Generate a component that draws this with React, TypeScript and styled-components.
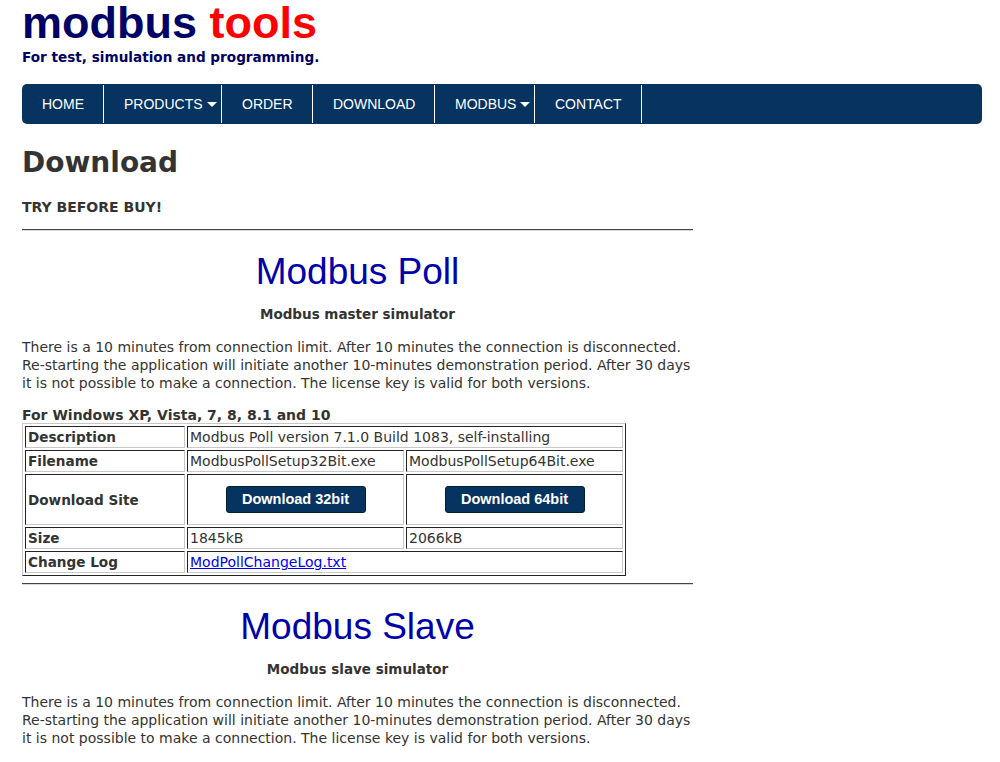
import React from "react";
import styled, { createGlobalStyle } from "styled-components";

const Global = createGlobalStyle`
  html, body { margin: 0; padding: 0; background: #fff; }
  body { font-family: "DejaVu Sans", Verdana, sans-serif; color: #333; }
`;

const Page = styled.div`
  padding: 0 18px 0 22px;
`;

const Header = styled.header`
  padding-top: 0;
`;

const Logo = styled.div`
  font-family: "Liberation Sans", Arial, sans-serif;
  font-weight: bold;
  font-size: 45px;
  line-height: 46px;
  color: #000066;
  margin: 0;
  span { color: #ff0000; }
`;

const Tagline = styled.div`
  font-family: "DejaVu Sans", sans-serif;
  font-weight: bold;
  font-size: 13.6px;
  color: #000066;
  margin-top: 3px;
  line-height: 16px;
`;

const Nav = styled.nav`
  margin-top: 19px;
  height: 40px;
  background: #06335f;
  border-radius: 5px;
  display: flex;
  align-items: stretch;
`;

const NavItem = styled.div<{ $w: number }>`
  width: ${(p) => p.$w}px;
  box-sizing: border-box;
  padding-left: 20px;
  display: flex;
  align-items: center;
  justify-content: flex-start;
  font-family: "Liberation Sans", Arial, sans-serif;
  font-size: 14px;
  color: #fff;
  position: relative;
  &::after {
    content: "";
    position: absolute;
    right: 0;
    top: 1px;
    bottom: 1px;
    width: 1px;
    background: #fff;
  }
`;

const Caret = styled.span`
  display: inline-block;
  width: 0;
  height: 0;
  margin-left: 4px;
  margin-top: 1px;
  border-left: 5px solid transparent;
  border-right: 5px solid transparent;
  border-top: 5px solid #fff;
`;

const Content = styled.main`
  width: 671px;
`;

const H1 = styled.h1`
  font-family: "DejaVu Sans", sans-serif;
  font-size: 28px;
  font-weight: bold;
  margin: 22px 0 0;
  line-height: 34px;
  color: #333;
`;

const Strong = styled.div`
  font-weight: bold;
  font-size: 14px;
  margin-top: 19px;
  line-height: 17px;
`;

const Rule = styled.hr<{ $mt: number }>`
  border: 0;
  border-top: 1px solid #444;
  border-bottom: 1px solid #d8d8d8;
  margin: ${(p) => p.$mt}px 0 0;
  height: 0;
`;

const ProductTitle = styled.h2<{ $mt: number }>`
  font-family: "Liberation Sans", Arial, sans-serif;
  font-weight: normal;
  font-size: 37px;
  line-height: 42px;
  color: #0000aa;
  text-align: center;
  margin: ${(p) => p.$mt}px 0 0;
`;

const Subtitle = styled.div`
  font-weight: bold;
  font-size: 13.5px;
  line-height: 18px;
  text-align: center;
  margin-top: 12px;
`;

const Para = styled.p`
  font-size: 14px;
  line-height: 18px;
  margin: 15px 0 0;
`;

const TableCaption = styled.div`
  font-weight: bold;
  font-size: 14px;
  line-height: 18px;
  margin-top: 14px;
`;

const Table = styled.table`
  border-collapse: separate;
  border-spacing: 2px;
  border: 1px solid;
  border-color: #c8c8c8 #222 #222 #c8c8c8;
  font-size: 14px;
  margin-top: -1px;
`;

const Td = styled.td<{ $head?: boolean; $center?: boolean; $w?: number }>`
  border: 1px solid;
  border-color: #222 #c8c8c8 #c8c8c8 #222;
  padding: 1px 2px;
  height: 18px;
  line-height: 18px;
  font-size: ${(p) => (p.$head ? "13.6px" : "14px")};
  font-weight: ${(p) => (p.$head ? "bold" : "normal")};
  text-align: ${(p) => (p.$center ? "center" : "left")};
  width: ${(p) => (p.$w ? `${p.$w}px` : "auto")};
  vertical-align: middle;
  white-space: nowrap;
`;

const TallTd = styled(Td)`
  height: 47px;
`;

const Button = styled.a`
  display: inline-block;
  width: 140px;
  box-sizing: border-box;
  height: 27px;
  line-height: 25px;
  background: #06335f;
  border: 1px solid #022;
  border-radius: 3px;
  color: #fff;
  font-family: "Liberation Sans", Arial, sans-serif;
  font-weight: bold;
  font-size: 14.5px;
  text-decoration: none;
  text-align: center;
`;

const Link = styled.a`
  color: #0000ee;
  text-decoration: underline;
`;

const navItems: { label: string; w: number; caret?: boolean }[] = [
  { label: "HOME", w: 82 },
  { label: "PRODUCTS", w: 118, caret: true },
  { label: "ORDER", w: 91 },
  { label: "DOWNLOAD", w: 122 },
  { label: "MODBUS", w: 100, caret: true },
  { label: "CONTACT", w: 107 },
];

const paraText =
  "There is a 10 minutes from connection limit. After 10 minutes the connection is disconnected. Re-starting the application will initiate another 10-minutes demonstration period. After 30 days it is not possible to make a connection. The license key is valid for both versions.";

export default function App() {
  return (
    <Page>
      <Global />
      <Header>
        <Logo>
          modbus <span>tools</span>
        </Logo>
        <Tagline>For test, simulation and programming.</Tagline>
      </Header>
      <Nav>
        {navItems.map((n) => (
          <NavItem key={n.label} $w={n.w}>
            {n.label}
            {n.caret && <Caret />}
          </NavItem>
        ))}
      </Nav>
      <Content>
        <H1>Download</H1>
        <Strong>TRY BEFORE BUY!</Strong>
        <Rule $mt={13} />
        <ProductTitle $mt={20}>Modbus Poll</ProductTitle>
        <Subtitle>Modbus master simulator</Subtitle>
        <Para>{paraText}</Para>
        <TableCaption>For Windows XP, Vista, 7, 8, 8.1 and 10</TableCaption>
        <Table>
          <tbody>
            <tr>
              <Td $head $w={154}>Description</Td>
              <Td colSpan={2}>Modbus Poll version 7.1.0 Build 1083, self-installing</Td>
            </tr>
            <tr>
              <Td $head>Filename</Td>
              <Td $w={211}>ModbusPollSetup32Bit.exe</Td>
              <Td $w={211}>ModbusPollSetup64Bit.exe</Td>
            </tr>
            <tr>
              <TallTd $head>Download Site</TallTd>
              <TallTd $center>
                <Button href="#">Download 32bit</Button>
              </TallTd>
              <TallTd $center>
                <Button href="#">Download 64bit</Button>
              </TallTd>
            </tr>
            <tr>
              <Td $head>Size</Td>
              <Td>1845kB</Td>
              <Td>2066kB</Td>
            </tr>
            <tr>
              <Td $head>Change Log</Td>
              <Td colSpan={2}>
                <Link href="#">ModPollChangeLog.txt</Link>
              </Td>
            </tr>
          </tbody>
        </Table>
        <Rule $mt={7} />
        <ProductTitle $mt={21}>Modbus Slave</ProductTitle>
        <Subtitle>Modbus slave simulator</Subtitle>
        <Para>{paraText}</Para>
      </Content>
    </Page>
  );
}
